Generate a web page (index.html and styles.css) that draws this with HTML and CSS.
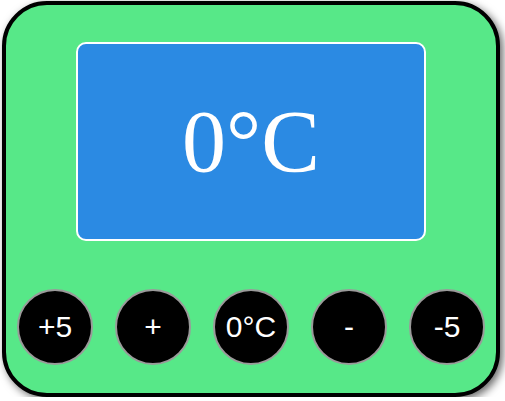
FILE: index.html
```html
<!DOCTYPE html>
<html>
<head>
<meta charset="utf-8">
<link rel="stylesheet" href="styles.css">
</head>
<body>
<div class="device">
  <div class="screen"><span class="temp">0°C</span></div>
  <div class="buttons">
    <button class="btn">+5</button>
    <button class="btn">+</button>
    <button class="btn">0°C</button>
    <button class="btn">-</button>
    <button class="btn">-5</button>
  </div>
</div>
</body>
</html>
```
FILE: styles.css
```css
html, body {
  margin: 0;
  padding: 0;
  background: #ffffff;
}
.device {
  box-sizing: border-box;
  width: 498px;
  height: 396px;
  margin: 1px 0 0 2px;
  background: #57e888;
  border: 4px solid #000;
  border-radius: 45px;
  box-shadow: 3px 3px 9px rgba(0, 0, 0, 0.6);
  padding-top: 37px;
  display: flex;
  flex-direction: column;
  align-items: center;
}
.screen {
  box-sizing: border-box;
  width: 350px;
  height: 199px;
  background: #2b8ae3;
  border: 2px solid #fff;
  border-radius: 10px;
  display: flex;
  align-items: center;
  justify-content: center;
}
.temp {
  font-family: "Liberation Serif", serif;
  font-size: 88px;
  color: #fff;
  line-height: 1;
}
.buttons {
  margin-top: 48px;
  display: flex;
  gap: 22px;
  justify-content: center;
}
.btn {
  box-sizing: border-box;
  width: 76px;
  height: 76px;
  border-radius: 50%;
  background: #000;
  border: 2px solid #9a9a9a;
  color: #fff;
  font-family: "Liberation Sans", Arial, sans-serif;
  font-size: 30px;
  padding: 0;
  display: flex;
  align-items: center;
  justify-content: center;
}
```
